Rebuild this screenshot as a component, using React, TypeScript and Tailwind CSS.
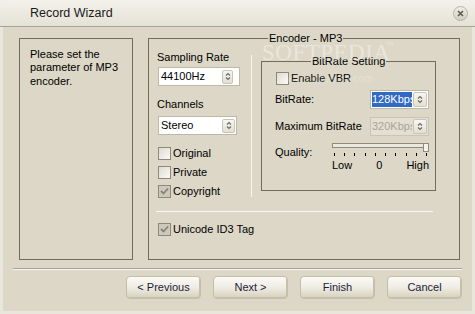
import React from "react";

function Spin({ cls }: { cls: string }) {
  return (
    <div className={"flex items-center justify-center rounded-[2px] border border-[#c9c5b6] bg-linear-to-b from-[#f7f6f1] to-[#e2dfd3] " + cls}>
      <svg width="6" height="9" viewBox="0 0 6 9">
        <path d="M1 3.5 L3 1.5 L5 3.5 M1 5.5 L3 7.5 L5 5.5" fill="none" stroke="#6e6b60" strokeWidth="1.2" />
      </svg>
    </div>
  );
}

function Check({ checked, label }: { checked?: boolean; label: string }) {
  return (
    <div className="flex h-[13px] items-center">
      <div
        className={
          "flex h-[13px] w-[13px] shrink-0 items-center justify-center border border-[#8c887a] " +
          (checked ? "bg-[#cdc9ba]" : "bg-linear-to-br from-[#dedbd0] to-[#fbfaf7]")
        }
      >
        {checked && (
          <svg width="9" height="9" viewBox="0 0 9 9">
            <path d="M1 4 L3.5 6.5 L8 1.5" fill="none" stroke="#86827a" strokeWidth="1.8" />
          </svg>
        )}
      </div>
      <span className="ml-[2px] leading-[13px] whitespace-nowrap">{label}</span>
    </div>
  );
}

function Btn({ label }: { label: string }) {
  return (
    <div className="flex h-[23px] w-[75px] items-center justify-center rounded-[4px] border border-[#c3bda9] bg-linear-to-b from-[#fbfaf6] via-[#efece3] to-[#d6d0bc] text-[#1c1c3b] shadow-[inset_-1px_-1px_0_#c8c1a9]">
      {label}
    </div>
  );
}

export default function App() {
  return (
    <div className="relative h-[314px] w-[475px] overflow-hidden bg-[#f2f0ea] font-[Liberation_Sans,Arial,sans-serif] text-[11px] text-black">
      <div className="flex h-[314px] w-[475px] flex-col rounded-t-[6px] border-x-[3px] border-b-[3px] border-[#e9e6dc] bg-[#dcd7c6]">
        {/* title bar */}
        <div className="-mx-[3px] flex h-[27px] shrink-0 items-center justify-between rounded-t-[6px] border-b border-[#a4a195] bg-linear-to-b from-[#f3f1ea] to-[#e5e2d7] pl-[30px] pr-[7px]">
          <span className="text-[12.5px] text-[#1a1a1a]">Record Wizard</span>
          <div className="flex h-[15px] w-[15px] items-center justify-center rounded-full border border-[#b7b3a5] bg-linear-to-b from-[#f1efe8] to-[#d2cebf]">
            <svg width="7" height="7" viewBox="0 0 7 7">
              <path d="M1 1 L6 6 M6 1 L1 6" stroke="#5d5a52" strokeWidth="1.6" />
            </svg>
          </div>
        </div>

        {/* panels */}
        <div className="mt-[11px] flex pl-[16px]">
          <div className="h-[222px] w-[114px] border border-[#716c5d] pl-[10px] pt-[9px] leading-[13.3px]">
            Please set the
            <br />
            parameter of MP3
            <br />
            encoder.
          </div>

          <div className="relative ml-[15px] h-[222px] w-[312px] border border-[#716c5d]">
            <span className="absolute -top-[8px] left-[119px] bg-[#dcd7c6] px-[1px] leading-[14px]">Encoder - MP3</span>

            <div className="flex h-[172px]">
              <div className="flex w-[102px] flex-col pl-[8px]">
                <div className="mt-[11px] h-[14px] leading-[14px]">Sampling Rate</div>
                <div className="mt-[3px] ml-[1px] flex h-[19px] w-[82px] items-center border border-[#bdb9a9] bg-white">
                  <span className="w-[63px] pl-[2px]">44100Hz</span>
                  <Spin cls="h-[14px] w-[11px]" />
                </div>
                <div className="mt-[11px] h-[14px] leading-[14px]">Channels</div>
                <div className="mt-[5px] ml-[1px] flex h-[19px] w-[79px] items-center border border-[#bdb9a9] bg-white">
                  <span className="w-[63px] pl-[2px]">Stereo</span>
                  <Spin cls="h-[14px] w-[13px]" />
                </div>
                <div className="mt-[12px] ml-[1px] flex flex-col gap-[6px]">
                  <Check label="Original" />
                  <Check label="Private" />
                  <Check checked label="Copyright" />
                </div>
              </div>

              <div className="mt-[16px] h-[142px] w-[1px] bg-[#f7f6f1]" />

              <div className="relative ml-[9px] mt-[22px] h-[130px] w-[175px] border border-[#716c5d]">
                <span className="absolute -top-[8px] left-[49px] bg-[#dcd7c6] px-[1px] leading-[14px]">BitRate Setting</span>
                <div className="ml-[14px] mt-[10px]">
                  <Check label="Enable VBR" />
                </div>
                <div className="mt-[5px] flex items-center">
                  <div className="w-[108px] pl-[13px]">BitRate:</div>
                  <div className="flex h-[19px] w-[59px] items-center border border-[#bdb9a9] bg-white pl-[1px]">
                    <div className="h-[15px] w-[40px] overflow-hidden whitespace-nowrap bg-[#316ac5] leading-[15px] text-white">128Kbps</div>
                    <Spin cls="h-[15px] w-[14px] ml-[1px]" />
                  </div>
                </div>
                <div className="mt-[8px] flex items-center">
                  <div className="w-[108px] pl-[13px]">Maximum BitRate</div>
                  <div className="flex h-[19px] w-[59px] items-center border border-[#c9c5b6] bg-[#e3dfd2] pl-[1px]">
                    <div className="h-[15px] w-[40px] overflow-hidden whitespace-nowrap leading-[15px] text-[#a9a596]">320Kbps</div>
                    <Spin cls="h-[15px] w-[14px] ml-[1px]" />
                  </div>
                </div>
                <div className="mt-[7px] flex">
                  <div className="mt-[2px] w-[70px] pl-[13px] leading-[14px]">Quality:</div>
                  <div className="flex w-[97px] flex-col">
                    <div className="relative h-[9px]">
                      <div className="mr-[2px] h-[5px] border border-[#8f8b7c] bg-[#ebe8df]" />
                      <div className="absolute right-0 top-0 h-[9px] w-[6px] border border-[#8f8b7c] bg-[#f4f2ea]" />
                    </div>
                    <div className="mt-[1px] flex justify-between px-[2px]">
                      {Array.from({ length: 10 }).map((_, i) => (
                        <div key={i} className="h-[3px] w-[1px] bg-black" />
                      ))}
                    </div>
                    <div className="mt-[3px] flex justify-between leading-[12px]">
                      <span>Low</span>
                      <span>0</span>
                      <span>High</span>
                    </div>
                  </div>
                </div>
              </div>
            </div>

            <div className="ml-[7px] h-[1px] w-[277px] bg-[#f7f6f1]" />
            <div className="ml-[9px] mt-[11px]">
              <Check checked label="Unicode ID3 Tag" />
            </div>
          </div>
        </div>

        {/* separator */}
        <div className="mx-[10px] mt-[8px] h-[2px] border-t border-b border-t-[#a5a194] border-b-[#f7f6f1]" />

        {/* buttons */}
        <div className="mt-[6px] flex justify-end gap-[12px] pr-[10px]">
          <Btn label="< Previous" />
          <Btn label="Next >" />
          <Btn label="Finish" />
          <Btn label="Cancel" />
        </div>
      </div>

      {/* watermark */}
      <div className="pointer-events-none absolute left-[262px] top-[41px] font-[Liberation_Serif,serif] text-[23px] leading-none tracking-[0.5px] text-white/40">
        SOFTPEDIA
      </div>
      <div className="pointer-events-none absolute left-[386px] top-[41px] font-[Liberation_Serif,serif] text-[8px] leading-none text-white/40">
        ™
      </div>
      <div className="pointer-events-none absolute left-[279px] top-[73px] text-[11px] leading-none text-white/25">
        www.softpedia.com
      </div>
    </div>
  );
}
